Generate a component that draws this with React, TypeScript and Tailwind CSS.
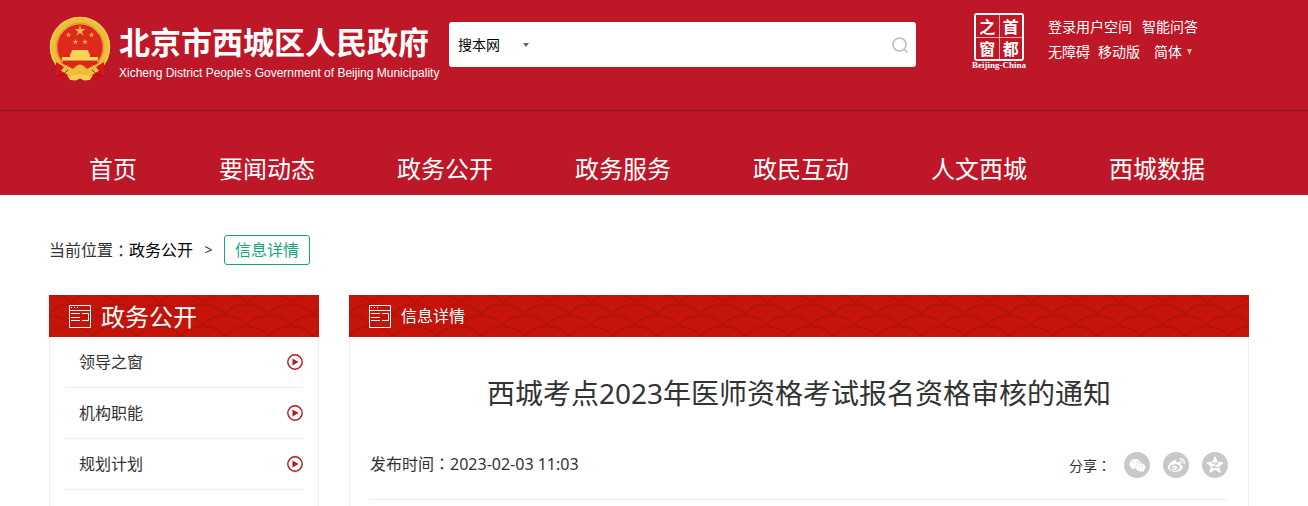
import type { ReactNode } from 'react'
import { FaWeibo, FaWeixin } from 'react-icons/fa'

const NAV = ['首页', '要闻动态', '政务公开', '政务服务', '政民互动', '人文西城', '西城数据']
const SIDE_MENU = ['领导之窗', '机构职能', '规划计划']

function Emblem() {
  return (
    <svg viewBox="0 0 62 66" className="h-[66px] w-[62px] shrink-0" aria-hidden="true">
      <path d="M6 44 L8 61 Q13 66 20 62 L31 59 L42 62 Q49 66 54 61 L56 44Z" fill="#cb101a" />
      <circle cx="31" cy="31" r="26.5" fill="#e0281f" stroke="#efbd3c" strokeWidth="7.5" />
      <circle cx="31" cy="31" r="29.5" fill="none" stroke="#f7d35c" strokeWidth="1" />
      <circle cx="31" cy="31" r="24" fill="none" stroke="#d99a26" strokeWidth="1" />
      <path d="M31 9l1.300 4h4.200l-3.400 2.500 1.300 4.100-3.400-2.500-3.400 2.500 1.300-4.100-3.400-2.500h4.200z" fill="#f3b93c" />
      <g fill="#efab3a">
        <path d="M19.500 16l.8 2h2.100l-1.700 1.300.7 2.100-1.900-1.300-1.900 1.300.7-2.100-1.700-1.300h2.100z" />
        <path d="M42.500 16l.8 2h2.100l-1.700 1.300.7 2.100-1.900-1.300-1.900 1.300.7-2.100-1.700-1.300h2.100z" />
        <path d="M26.500 23l.8 2h2.100l-1.700 1.300.7 2.100-1.900-1.300-1.900 1.300.7-2.100-1.700-1.300h2.100z" />
        <path d="M36 23l.8 2h2.100l-1.700 1.300.7 2.100-1.900-1.300-1.900 1.300.7-2.100-1.700-1.300h2.100z" />
      </g>
      <path d="M23 34h16l1 3.500H22zM21 37.500h20V41H21zM13 41h36v3.500H13z" fill="#f8d45a" />
      <path d="M12 46h38l-4 3H16z" fill="#d8281d" />
      <path d="M6 46l9 3 9 5 2-3q5-5 10 0l2 3 9-5 9-3-2 7-8-1-10 6q-5-5-10 0l-10-6-8 1z" fill="#efbd3c" />
      <path d="M18 59q7 2 11-1h4q4 3 11 1l-3 5-6 .5-4-2-4 2-6-.5z" fill="#f6cd55" />
      <path d="M7 46l8 5-4 5-4 3zM55 46l-8 5 4 5 4 3z" fill="#d9161c" />
      <path d="M10 60q5-1 9-6M52 60q-5-1-9-6" fill="none" stroke="#98101a" strokeWidth="1" />
    </svg>
  )
}

// one scale of the wave pattern, drawn from its top edge down
function Scale({ x, top }: { x: number; top: number }) {
  return (
    <g>
      <ellipse cx={x} cy={top + 16} rx="25" ry="16" fill="#cb1409" />
      <ellipse cx={x} cy={top + 17} rx="23.500" ry="15.500" fill="none" stroke="#b5130a" strokeWidth="2.500" />
      {[20, 17, 14, 11, 8].map((rx) => (
        <ellipse key={rx} cx={x} cy={top + 17} rx={rx} ry={rx * 0.64} fill="none" stroke="#bf140a" strokeWidth="1" />
      ))}
    </g>
  )
}

function PanelHead({ id, children }: { id: string; children: ReactNode }) {
  return (
    <div className="relative h-[42px] overflow-hidden bg-[#cb1409] text-white">
      <svg className="absolute inset-0 h-full w-full" aria-hidden="true">
        <pattern id={id} width="44" height="22" patternUnits="userSpaceOnUse">
          <Scale x={22} top={-14} />
          <Scale x={0} top={-3} />
          <Scale x={44} top={-3} />
          <Scale x={22} top={8} />
          <Scale x={0} top={19} />
          <Scale x={44} top={19} />
        </pattern>
        <rect width="100%" height="100%" fill={`url(#${id})`} />
      </svg>
      <div className="relative flex h-full items-center gap-2.5 px-5">
        <svg viewBox="0 0 22 23" className="h-[23px] w-[22px]" fill="none" stroke="#fff" aria-hidden="true">
          <path d="M.5.5h21v22H.5zM.5 5.500h21M2 8.500h9M2 12.500h9M2 15.500h9M13 8.500h6.500v7H13" />
          <path d="M2 2.500h1M5 2.500h1M8 2.500h1" />
        </svg>
        {children}
      </div>
    </div>
  )
}

function PlayIcon() {
  return (
    <svg viewBox="0 0 16 16" className="h-4 w-4" aria-hidden="true">
      <circle cx="8" cy="8" r="7.200" fill="none" stroke="#b8161c" strokeWidth="1.400" />
      <path d="M5.500 4.600v6.800L11.500 8z" fill="#b8161c" />
    </svg>
  )
}

function QzoneIcon() {
  return (
    <svg viewBox="0 0 18 18" className="h-[18px] w-[18px]" aria-hidden="true">
      <path d="M9 .8l2.300 5.400 5.900.5-4.500 3.900 1.400 5.800L9 13.300l-5.100 3.100 1.400-5.800L.8 6.700l5.900-.5z" fill="#fff" stroke="#fff" strokeLinejoin="round" />
      <path d="M6 7.200h5.500L6.800 11.300q2.500.6 5.700 0" fill="none" stroke="#c8c8c8" strokeWidth="1.200" />
    </svg>
  )
}

function Header() {
  return (
    <header className="bg-[#be1728] pr-2.5 text-white">
      <div className="mx-auto flex h-[110px] max-w-[1200px] items-start">
        <a href="#" className="flex w-[400px] shrink-0 items-start gap-2 pt-4">
          <Emblem />
          <span className="whitespace-nowrap pt-1.5">
            <span className="block text-[31px] font-bold leading-10">北京市西城区人民政府</span>
            <span className="block pt-[3px] font-['Liberation_Sans',sans-serif] text-[12px] leading-4">
              Xicheng District People's Government of Beijing Municipality
            </span>
          </span>
        </a>

        <form className="mt-[22px] flex h-[45px] max-w-[467px] flex-1 items-center rounded-[3px] bg-white px-2 text-black">
          <div className="relative flex items-center">
            <select aria-label="搜索范围" className="w-20 appearance-none bg-transparent pl-px text-sm outline-none">
              <option>搜本网</option>
            </select>
            <svg viewBox="0 0 6 4" className="pointer-events-none absolute right-2 h-1 w-1.5" aria-hidden="true">
              <path d="M0 0h6L3 4z" fill="#666" />
            </svg>
          </div>
          <input type="text" aria-label="搜索" className="h-full min-w-0 flex-1 px-2 text-sm outline-none" />
          <button type="button" aria-label="搜索">
            <svg viewBox="0 0 16 16" className="h-4 w-4" fill="none" stroke="#bbb" strokeWidth="1.500" aria-hidden="true">
              <circle cx="7.500" cy="7.500" r="6.500" />
              <path d="M12.200 12.200l3.300 3.300" />
            </svg>
          </button>
        </form>

        <a href="#" className="ml-[56px] mt-[13px] flex w-[54px] shrink-0 flex-col items-center">
          <span className="grid h-12 w-[50px] grid-cols-2 grid-rows-2 gap-px rounded-[3px] border-2 border-white bg-[#e9a9ae] font-['Noto_Sans_CJK_SC',sans-serif] text-base font-bold leading-4">
            {['之', '首', '窗', '都'].map((c) => (
              <span key={c} className="flex items-center justify-center overflow-hidden bg-[#be1728]">{c}</span>
            ))}
          </span>
          <span className="font-['Liberation_Serif',serif] text-[9px] font-bold leading-[9px]">Beijing-China</span>
        </a>

        <div className="ml-[22px] mt-3.5 shrink-0 whitespace-nowrap text-sm leading-[25px]">
          <div className="flex gap-2.5">
            <a href="#">登录用户空间</a>
            <a href="#">智能问答</a>
          </div>
          <div className="flex gap-2">
            <a href="#">无障碍</a>
            <a href="#">移动版</a>
            <a href="#" className="flex items-center gap-[5px] pl-1.5">
              简体
              <svg viewBox="0 0 5 6" className="h-1.5 w-[5px]" aria-hidden="true">
                <path d="M0 0h5L2.500 6z" fill="#dcb377" />
              </svg>
            </a>
          </div>
        </div>
      </div>
    </header>
  )
}

export default function App() {
  return (
    <div className="bg-white font-['Noto_Sans','Noto_Sans_CJK_SC',sans-serif] text-base text-[#333]">
      <Header />
      <nav className="border-t border-[#8f1523] bg-[#be1728] pr-2.5">
        <ul className="mx-auto flex h-[84px] max-w-[1200px] items-end gap-0.5 pb-2.5">
          {NAV.map((item) => (
            <li key={item} className="shrink-0 px-10">
              <a href="#" className="block text-2xl leading-8 text-white">{item}</a>
            </li>
          ))}
        </ul>
      </nav>

      <div className="pr-2.5">
        <div className="mx-auto max-w-[1200px]">
          <div className="flex items-center pb-[30px] pt-10">
            <span>当前位置</span>
            <span className="font-['Noto_Sans_CJK_TC',sans-serif]">：</span>
            <a href="#" className="text-black">政务公开</a>
            <span className="w-[31px] text-center text-sm">&gt;</span>
            <a href="#" className="flex h-[30px] items-center rounded-[3px] border border-[#16a57c] px-2.5 text-[#16a57c]">信息详情</a>
          </div>

          <div className="flex gap-[30px]">
            <aside className="w-[270px] shrink-0">
              <PanelHead id="side-waves">
                <h2 className="pt-0.5 text-2xl leading-8">政务公开</h2>
              </PanelHead>
              <ul className="border-x border-[#eee] px-[15px] pb-4">
                {SIDE_MENU.map((item) => (
                  <li key={item} className="border-b border-[#eee]">
                    <a href="#" className="flex h-[50px] items-center justify-between pl-3.5">
                      {item}
                      <PlayIcon />
                    </a>
                  </li>
                ))}
              </ul>
            </aside>

            <main className="flex min-w-0 flex-1 flex-col">
              <PanelHead id="main-waves">
                <h2>信息详情</h2>
              </PanelHead>
              <article className="flex-1 border-x border-[#eee] px-5">
                <h1 className="pt-9 text-center text-[28px] leading-10">西城考点2023年医师资格考试报名资格审核的通知</h1>
                <div className="mt-[38px] flex items-start justify-between border-b border-[#eee] pb-[21px]">
                  <p className="leading-6">
                    发布时间<span className="font-['Noto_Sans_CJK_TC',sans-serif]">：</span>2023-02-03 11:03
                  </p>
                  <div className="flex items-center gap-[13px] pt-px">
                    <span className="text-sm">
                      分享<span className="font-['Noto_Sans_CJK_TC',sans-serif]">：</span>
                    </span>
                    <a href="#" aria-label="微信" className="flex h-[26px] w-[26px] items-center justify-center rounded-full bg-[#c8c8c8] text-white">
                      <FaWeixin size={17} />
                    </a>
                    <a href="#" aria-label="微博" className="flex h-[26px] w-[26px] items-center justify-center rounded-full bg-[#c8c8c8] text-white">
                      <FaWeibo size={17} />
                    </a>
                    <a href="#" aria-label="QQ空间" className="flex h-[26px] w-[26px] items-center justify-center rounded-full bg-[#c8c8c8]">
                      <QzoneIcon />
                    </a>
                  </div>
                </div>
              </article>
            </main>
          </div>
        </div>
      </div>
    </div>
  )
}
